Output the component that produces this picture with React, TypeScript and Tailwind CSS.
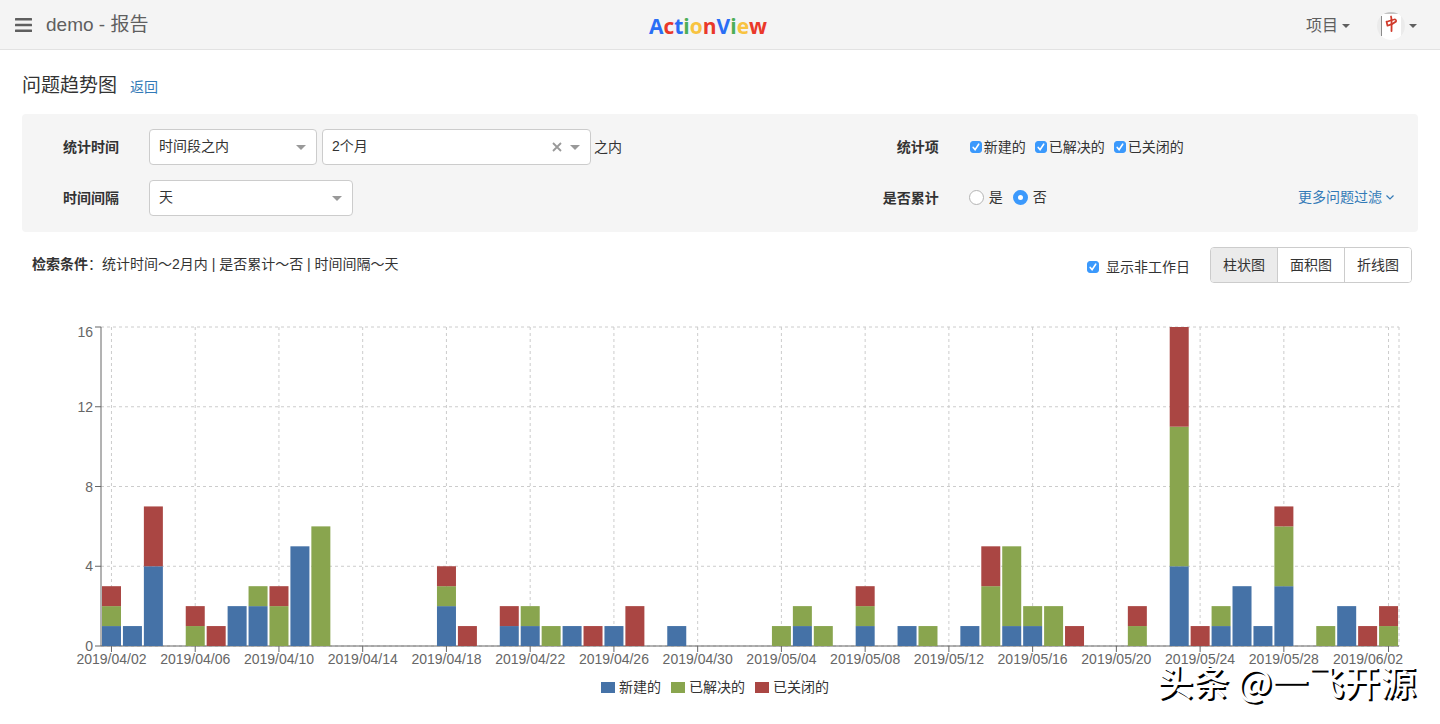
import { useState } from 'react';
import type { ReactNode } from 'react';

type SeriesKey = 'created' | 'resolved' | 'closed';

const series: { key: SeriesKey; name: string; color: string }[] = [
  { key: 'created', name: '新建的', color: '#4572a7' },
  { key: 'resolved', name: '已解决的', color: '#89a54e' },
  { key: 'closed', name: '已关闭的', color: '#aa4643' },
];

// day offset from 2019/04/02 -> [created, resolved, closed]
const counts: Record<number, [number, number, number]> = {
  0: [1, 1, 1], 1: [1, 0, 0], 2: [4, 0, 3], 4: [0, 1, 1], 5: [0, 0, 1],
  6: [2, 0, 0], 7: [2, 1, 0], 8: [0, 2, 1], 9: [5, 0, 0], 10: [0, 6, 0],
  16: [2, 1, 1], 17: [0, 0, 1], 19: [1, 0, 1], 20: [1, 1, 0], 21: [0, 1, 0],
  22: [1, 0, 0], 23: [0, 0, 1], 24: [1, 0, 0], 25: [0, 0, 2], 27: [1, 0, 0],
  32: [0, 1, 0], 33: [1, 1, 0], 34: [0, 1, 0], 36: [1, 1, 1], 38: [1, 0, 0],
  39: [0, 1, 0], 41: [1, 0, 0], 42: [0, 3, 2], 43: [1, 4, 0], 44: [1, 1, 0],
  45: [0, 2, 0], 46: [0, 0, 1], 49: [0, 1, 1], 51: [4, 7, 5], 52: [0, 0, 1],
  53: [1, 1, 0], 54: [3, 0, 0], 55: [1, 0, 0], 56: [3, 3, 1], 58: [0, 1, 0],
  59: [2, 0, 0], 60: [0, 0, 1], 61: [0, 1, 1],
};

const dateTicks = [
  { day: 0, label: '2019/04/02' },
  { day: 4, label: '2019/04/06' },
  { day: 8, label: '2019/04/10' },
  { day: 12, label: '2019/04/14' },
  { day: 16, label: '2019/04/18' },
  { day: 20, label: '2019/04/22' },
  { day: 24, label: '2019/04/26' },
  { day: 28, label: '2019/04/30' },
  { day: 32, label: '2019/05/04' },
  { day: 36, label: '2019/05/08' },
  { day: 40, label: '2019/05/12' },
  { day: 44, label: '2019/05/16' },
  { day: 48, label: '2019/05/20' },
  { day: 52, label: '2019/05/24' },
  { day: 56, label: '2019/05/28' },
  { day: 61, label: '2019/06/02' },
];

const logo = [
  { letter: 'A', className: 'text-[#2a6ef5]' },
  { letter: 'c', className: 'text-[#ea3829]' },
  { letter: 't', className: 'text-[#2a6ef5]' },
  { letter: 'i', className: 'text-[#4cae57]' },
  { letter: 'o', className: 'text-[#f8c340]' },
  { letter: 'n', className: 'text-[#ea3829]' },
  { letter: 'V', className: 'text-[#2a6ef5]' },
  { letter: 'i', className: 'text-[#4cae57]' },
  { letter: 'e', className: 'text-[#f8c340]' },
  { letter: 'w', className: 'text-[#ea3829]' },
];

function Caret({ className }: { className: string }) {
  return (
    <svg viewBox="0 0 10 5" className={className} aria-hidden="true">
      <path d="M0 0h10L5 5z" fill="currentColor" />
    </svg>
  );
}

function Select({ id, label, options, className, onClear }: {
  id: string;
  label: string;
  options: string[];
  className: string;
  onClear?: () => void;
}) {
  return (
    <div className={`relative ${className}`}>
      <select
        id={id}
        aria-label={label}
        className="block h-9 w-full appearance-none rounded border border-[#ccc] bg-white pb-[3px] pl-[9px] pr-10 text-sm text-[#333] outline-none"
      >
        {options.map((option) => (
          <option key={option}>{option}</option>
        ))}
      </select>
      {onClear && (
        <button type="button" aria-label="清除" onClick={onClear} className="absolute right-7 top-3 flex h-3 w-3 items-center justify-center text-[#999]">
          <svg viewBox="0 0 10 10" className="h-2.5 w-2.5" stroke="currentColor" strokeWidth="1.8">
            <path d="M1 1l8 8M9 1L1 9" />
          </svg>
        </button>
      )}
      <Caret className="pointer-events-none absolute right-[11px] top-4 h-[5px] w-2.5 text-[#999]" />
    </div>
  );
}

function Checkbox({ checked, onChange, className, children }: {
  checked: boolean;
  onChange: () => void;
  className: string;
  children: ReactNode;
}) {
  return (
    <label className={`flex items-center ${className}`}>
      <span className="grid h-[13px] w-[13px] place-items-center">
        <input
          type="checkbox"
          checked={checked}
          onChange={onChange}
          className="col-start-1 row-start-1 h-3 w-3 appearance-none rounded-[3px] border border-[#bbb] bg-white checked:border-[#3b99fc] checked:bg-[#3b99fc]"
        />
        {checked && (
          <svg viewBox="0 0 12 12" className="pointer-events-none col-start-1 row-start-1 h-3 w-3" fill="none" stroke="#fff" strokeWidth="1.6" strokeLinecap="round">
            <path d="M3.2 6.4l1.9 2.2 3.6-5.4" />
          </svg>
        )}
      </span>
      {children}
    </label>
  );
}

function TrendChart({ visible }: { visible: Record<SeriesKey, boolean> }) {
  const left = 79;
  const right = 1377;
  const top = 17;
  const bottom = 336;
  const band = (right - left) / 62;
  const unit = (bottom - top) / 16;
  const center = (day: number) => left + (day + 0.5) * band;

  return (
    <svg viewBox="0 0 1396 362" className="block h-auto w-full" role="img" aria-label="问题趋势图">
      <g stroke="#ccc" strokeDasharray="3 3">
        {[0, 4, 8, 12, 16].map((v) => (
          <line key={v} x1={left} x2={right} y1={bottom - v * unit} y2={bottom - v * unit} />
        ))}
        {dateTicks.map((t) => (
          <line key={t.day} x1={center(t.day)} x2={center(t.day)} y1={top} y2={bottom} />
        ))}
        <line x1={right} x2={right} y1={top} y2={bottom} />
      </g>

      <g stroke="#666">
        <line x1={left} x2={left} y1={top} y2={bottom} />
        <line x1={left} x2={right} y1={bottom} y2={bottom} />
        {[0, 4, 8, 12, 16].map((v) => (
          <line key={v} x1={left - 6} x2={left} y1={bottom - v * unit} y2={bottom - v * unit} />
        ))}
        {dateTicks.map((t) => (
          <line key={t.day} x1={center(t.day)} x2={center(t.day)} y1={bottom} y2={bottom + 6} />
        ))}
      </g>

      {/* Stacked bars */}
      {Object.entries(counts).map(([day, values]) => {
        let y = bottom;
        return (
          <g key={day}>
            {series.map((s, i) => {
              if (!visible[s.key] || values[i] === 0) return null;
              y -= values[i] * unit;
              return <rect key={s.key} x={left + 1 + Number(day) * band} y={y} width={19} height={values[i] * unit} fill={s.color} />;
            })}
          </g>
        );
      })}

      <g fill="#666" fontSize="14">
        {[0, 4, 8, 12, 16].map((v) => (
          <text key={v} x={left - 8} y={v === 16 ? top + 10 : bottom - v * unit + 5} textAnchor="end">{v}</text>
        ))}
        {dateTicks.map((t) => (
          <text key={t.day} x={t.day === 61 ? 1346 : center(t.day)} y={354} textAnchor="middle">{t.label}</text>
        ))}
      </g>
    </svg>
  );
}

export default function App() {
  const [visible, setVisible] = useState<Record<SeriesKey, boolean>>({ created: true, resolved: true, closed: true });
  const [accumulate, setAccumulate] = useState('否');
  const [showHolidays, setShowHolidays] = useState(true);
  const [shape, setShape] = useState('柱状图');
  const [periodKey, setPeriodKey] = useState(0);

  return (
    <div className="min-h-screen bg-white font-['Liberation_Sans','Noto_Sans_CJK_SC',sans-serif] text-sm text-[#333]">
      <header className="grid h-[50px] grid-cols-[1fr_auto_1fr] items-center border-b border-[#e2e2e2] bg-[#f4f4f4] pl-[15px] pr-[23px] pt-px text-[#5f5f5f]">
        <div className="flex items-center gap-[14px]">
          <button type="button" aria-label="菜单">
            <svg viewBox="0 0 17 14" className="block h-[14px] w-[17px]" fill="currentColor">
              <rect width="17" height="2.4" rx="0.5" />
              <rect y="5.8" width="17" height="2.4" rx="0.5" />
              <rect y="11.6" width="17" height="2.4" rx="0.5" />
            </svg>
          </button>
          <span className="text-[19px] leading-7">demo - 报告</span>
        </div>
        <a href="#" className="mr-4 pt-px font-['Open_Sans',sans-serif] text-[21px] font-bold leading-7">
          {logo.map((l, i) => (
            <span key={i} className={l.className}>{l.letter}</span>
          ))}
        </a>
        <div className="flex items-center justify-end gap-[27px] pt-px">
          <button type="button" className="flex items-center gap-1 text-base">
            项目
            <Caret className="h-1 w-2" />
          </button>
          <button type="button" aria-label="用户" className="flex items-center gap-1">
            <svg viewBox="0 0 28 28" className="h-7 w-7">
              <defs>
                <clipPath id="avatar">
                  <circle cx="14" cy="14" r="14" />
                </clipPath>
              </defs>
              <g clipPath="url(#avatar)" fill="none">
                <rect width="28" height="28" fill="#ebebeb" />
                <rect x="4" y="0" width="20" height="28" rx="2" fill="#fff" />
                <path d="M4.500 24V4M7 1h14" stroke="#8a8a8a" />
                {/* brush mark on the tile */}
                <g stroke="#d03a2b" strokeLinecap="round" strokeLinejoin="round">
                  <path d="M14 4.500c.8 2 .7 8 .5 14.500" strokeWidth="1.800" />
                  <path d="M9.500 9.500l1 4.200c3-.8 6-2 8.500-4.200.6-1.200-.4-2.200-1.800-2-2.400.4-4.400 1.200-7 2.200" strokeWidth="1.700" />
                </g>
              </g>
            </svg>
            <Caret className="h-1 w-2" />
          </button>
        </div>
      </header>

      <main className="px-[22px]">
        <div className="flex items-baseline gap-[13px] pt-[22px]">
          <h1 className="text-[19px] leading-7">问题趋势图</h1>
          <a href="#" className="text-[#337ab7]">返回</a>
        </div>

        <form className="mt-[14px] flex flex-col gap-[15px] rounded bg-[#f5f5f5] pb-4 pt-[15px]">
          <div className="flex items-center">
            <div className="flex w-2/3 items-center">
              <label htmlFor="stat-time" className="w-[97px] text-right font-bold">统计时间</label>
              <Select id="stat-time" label="统计时间" options={['时间段之内', '时间段之外']} className="ml-[30px] w-[168px]" />
              <Select
                key={periodKey}
                id="period"
                label="时间段"
                options={['2个月', '1个月', '3个月']}
                className="ml-[5px] w-[269px]"
                onClear={() => setPeriodKey(periodKey + 1)}
              />
              <span className="ml-[3px]">之内</span>
              <span className="ml-auto mr-[14px] font-bold">统计项</span>
            </div>
            <div className="flex flex-1 items-center gap-[9px] pl-[17px]">
              {series.map((s) => (
                <Checkbox
                  key={s.key}
                  className="gap-px"
                  checked={visible[s.key]}
                  onChange={() => setVisible({ ...visible, [s.key]: !visible[s.key] })}
                >
                  {s.name}
                </Checkbox>
              ))}
            </div>
          </div>

          <div className="flex items-center">
            <div className="flex w-2/3 items-center">
              <label htmlFor="interval" className="w-[97px] text-right font-bold">时间间隔</label>
              <Select id="interval" label="时间间隔" options={['天', '周', '月']} className="ml-[30px] w-[204px]" />
              <span className="ml-auto mr-[14px] font-bold">是否累计</span>
            </div>
            <div className="flex flex-1 items-center gap-[10px] pb-0.5 pl-4 pr-6">
              {['是', '否'].map((option) => (
                <label key={option} className="flex items-center gap-[5px]">
                  <input
                    type="radio"
                    name="accumulate"
                    checked={accumulate === option}
                    onChange={() => setAccumulate(option)}
                    className="h-[15px] w-[15px] appearance-none rounded-full border border-[#b4b4b4] bg-white checked:border-[5px] checked:border-[#3b99fc]"
                  />
                  {option}
                </label>
              ))}
              <a href="#" className="ml-auto flex items-center gap-1 text-[#337ab7]">
                更多问题过滤
                <svg viewBox="0 0 8 5" className="h-[5px] w-2" fill="none" stroke="currentColor" strokeWidth="1.2">
                  <path d="M0.500 0.500L4 4l3.500-3.500" />
                </svg>
              </a>
            </div>
          </div>
        </form>

        <div className="mt-[15px] flex items-center justify-between pl-[10px] pr-[6px]">
          <p className="pb-0.5"><b>检索条件</b>：统计时间～2月内 | 是否累计～否 | 时间间隔～天</p>
          <div className="flex items-center gap-5">
            <Checkbox className="gap-[7px] pt-1" checked={showHolidays} onChange={() => setShowHolidays(!showHolidays)}>
              显示非工作日
            </Checkbox>
            <div className="flex h-9 divide-x divide-[#ccc] overflow-hidden rounded border border-[#ccc]">
              {['柱状图', '面积图', '折线图'].map((name) => (
                <button
                  key={name}
                  type="button"
                  onClick={() => setShape(name)}
                  className={`px-3 ${shape === name ? 'bg-[#ebebeb]' : 'bg-white'}`}
                >
                  {name}
                </button>
              ))}
            </div>
          </div>
        </div>

        <section className="relative mt-[27px]">
          <TrendChart visible={visible} />
          <ul className="flex h-[30px] items-center justify-center gap-[10px] pr-[10px]">
            {series.map((s) => (
              <li key={s.key} className="flex items-center gap-1">
                <span className="h-[11px] w-[14px]" style={{ backgroundColor: s.color }} />
                {s.name}
              </li>
            ))}
          </ul>
          <p className="pointer-events-none absolute bottom-1 right-0.5 whitespace-nowrap font-['Noto_Sans_CJK_SC',sans-serif] text-4xl leading-9 font-medium text-white [text-shadow:2px_2px_0_#000]">头条 @一飞开源</p>
        </section>
      </main>
    </div>
  );
}
